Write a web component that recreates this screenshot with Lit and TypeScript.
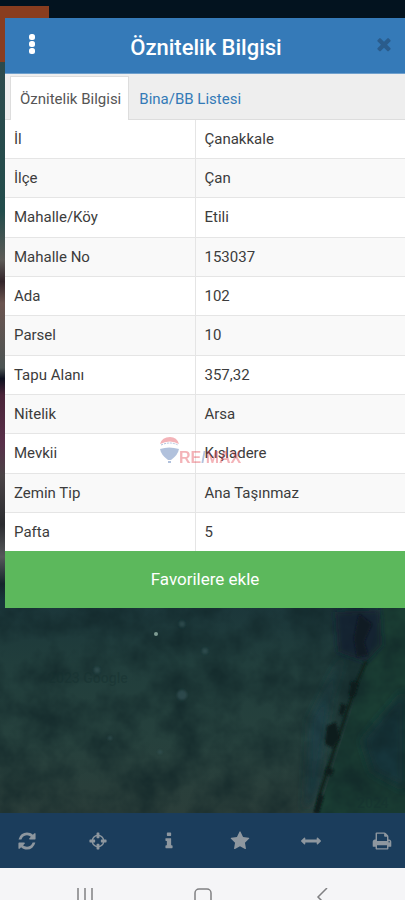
import { LitElement, html, svg, css } from "lit";
import { customElement, state } from "lit/decorators.js";

const ICONS: Record<string, string> = {
  refresh:
    "M1639 1056q0 5-1 7-64 268-268 434.500t-478 166.500q-146 0-282.500-55t-243.500-157l-129 129q-19 19-45 19t-45-19-19-45v-448q0-26 19-45t45-19h448q26 0 45 19t19 45-19 45l-137 137q71 66 161 102t187 36q134 0 250-65t186-179q11-17 53-117 8-23 30-23h192q13 0 22.500 9.500t9.500 22.500zm25-800v448q0 26-19 45t-45 19h-448q-26 0-45-19t-19-45 19-45l138-138q-148-137-349-137-134 0-250 65t-186 179q-11 17-53 117-8 23-30 23h-199q-13 0-22.500-9.500t-9.500-22.500v-7q65-268 270-434.500t480-166.500q146 0 284 55.500t245 156.500l130-129q19-19 45-19t45 19 19 45z",
  crosshairs:
    "M1325 1024h-109q-26 0-45-19t-19-45v-128q0-26 19-45t45-19h109q-32-108-112.500-188.500t-188.500-112.500v109q0 26-19 45t-45 19h-128q-26 0-45-19t-19-45v-109q-108 32-188.500 112.500t-112.500 188.500h109q26 0 45 19t19 45v128q0 26-19 45t-45 19h-109q32 108 112.500 188.500t188.500 112.500v-109q0-26 19-45t45-19h128q26 0 45 19t19 45v109q108-32 188.500-112.500t112.500-188.500zm339-192v128q0 26-19 45t-45 19h-143q-37 161-154.500 278.500t-278.500 154.500v143q0 26-19 45t-45 19h-128q-26 0-45-19t-19-45v-143q-161-37-278.500-154.500t-154.500-278.500h-143q-26 0-45-19t-19-45v-128q0-26 19-45t45-19h143q37-161 154.500-278.500t278.500-154.500v-143q0-26 19-45t45-19h128q26 0 45 19t19 45v143q161 37 278.500 154.500t154.500 278.500h143q26 0 45 19t19 45z",
  info: "M1216 1344v128q0 26-19 45t-45 19h-512q-26 0-45-19t-19-45v-128q0-26 19-45t45-19h64v-384h-64q-26 0-45-19t-19-45v-128q0-26 19-45t45-19h384q26 0 45 19t19 45v576h64q26 0 45 19t19 45zm-128-1152v192q0 26-19 45t-45 19h-256q-26 0-45-19t-19-45v-192q0-26 19-45t45-19h256q26 0 45 19t19 45z",
  star: "M1728 647q0 22-26 48l-363 354 86 500q1 7 1 20 0 21-10.500 35.500t-30.500 14.500q-19 0-40-12l-449-236-449 236q-22 12-40 12-21 0-31.500-14.500t-10.500-35.500q0-6 2-20l86-500-364-354q-25-27-25-48 0-37 56-46l502-73 225-455q19-41 49-41t49 41l225 455 502 73q56 9 56 46z",
  arrows:
    "M1792 896q0 26-19 45l-256 256q-19 19-45 19t-45-19-19-45v-128h-1024v128q0 26-19 45t-45 19-45-19l-256-256q-19-19-19-45t19-45l256-256q19-19 45-19t45 19 19 45v128h1024v-128q0-26 19-45t45-19 45 19l256 256q19 19 19 45z",
  print:
    "M448 1536h896v-256h-896v256zm0-640h896v-384h-160q-40 0-68-28t-28-68v-160h-640v640zm1152 64q0-26-19-45t-45-19-45 19-19 45 19 45 45 19 45-19 19-45zm128 0v416q0 13-9.500 22.500t-22.500 9.500h-224v160q0 40-28 68t-68 28h-960q-40 0-68-28t-28-68v-160h-224q-13 0-22.500-9.500t-9.500-22.500v-416q0-79 56.500-135.500t135.500-56.500h64v-544q0-40 28-68t68-28h672q40 0 88 20t76 48l152 152q28 28 48 76t20 88v256h64q79 0 135.500 56.500t56.500 135.500z",
  times:
    "M1490 1322q0 40-28 68l-136 136q-28 28-68 28t-68-28l-294-294-294 294q-28 28-68 28t-68-28l-136-136q-28-28-28-68t28-68l294-294-294-294q-28-28-28-68t28-68l136-136q28-28 68-28t68 28l294 294 294-294q28-28 68-28t68 28l136 136q28 28 28 68t-28 68l-294 294 294 294q28 28 28 68z",
};

const icon = (name: string) => html`
  <svg class="icon" viewBox="0 0 1792 1792" aria-hidden="true">${svg`<path d=${ICONS[name]} />`}</svg>
`;

const ROWS = [
  ["İl", "Çanakkale"],
  ["İlçe", "Çan"],
  ["Mahalle/Köy", "Etili"],
  ["Mahalle No", "153037"],
  ["Ada", "102"],
  ["Parsel", "10"],
  ["Tapu Alanı", "357,32"],
  ["Nitelik", "Arsa"],
  ["Mevkii", "Kışladere"],
  ["Zemin Tip", "Ana Taşınmaz"],
  ["Pafta", "5"],
];

const TOOLS = [
  ["refresh", "Yenile"],
  ["crosshairs", "Konum"],
  ["info", "Bilgi"],
  ["star", "Favoriler"],
  ["arrows", "Ölçüm"],
  ["print", "Yazdır"],
];

/** Dimmed satellite view behind the dialog. */
@customElement("satellite-map")
class SatelliteMap extends LitElement {
  static styles = css`
    :host {
      display: block;
      overflow: hidden;
      background: #1f3a38;
    }
    .view {
      display: block;
      width: 100%;
      height: 100%;
    }
    .stamp {
      font: 500 14px Roboto, sans-serif;
      fill: #15302f;
      fill-opacity: 0.45;
    }
  `;
  render() {
    return html`
      <svg class="view" viewBox="0 0 405 813" preserveAspectRatio="xMidYMax slice" aria-hidden="true">
        <defs>
          <linearGradient id="ground" x1="0" y1="600" x2="0" y2="813" gradientUnits="userSpaceOnUse">
            <stop offset="0" stop-color="#1b363a" />
            <stop offset="0.3" stop-color="#213e3c" />
            <stop offset="0.65" stop-color="#26413d" />
            <stop offset="1" stop-color="#2b3e3a" />
          </linearGradient>
          <linearGradient id="edge" x1="0" y1="60" x2="0" y2="600" gradientUnits="userSpaceOnUse">
            <stop offset="0" stop-color="#2c4a4c" />
            <stop offset="0.28" stop-color="#234d4c" />
            <stop offset="0.37" stop-color="#5c5a56" />
            <stop offset="0.41" stop-color="#33252a" />
            <stop offset="0.45" stop-color="#6b5550" />
            <stop offset="0.57" stop-color="#4c5453" />
            <stop offset="0.59" stop-color="#0e1120" />
            <stop offset="0.62" stop-color="#4a2438" />
            <stop offset="0.71" stop-color="#59304a" />
            <stop offset="0.77" stop-color="#4a4446" />
            <stop offset="0.86" stop-color="#2b2c30" />
            <stop offset="0.92" stop-color="#55585a" />
            <stop offset="0.97" stop-color="#15252b" />
            <stop offset="1" stop-color="#17353a" />
          </linearGradient>
          <filter id="grain" x="0" y="0" width="100%" height="100%" color-interpolation-filters="sRGB">
            <feTurbulence type="fractalNoise" baseFrequency="0.03" numOctaves="4" seed="8" />
            <feColorMatrix values="0 0 0 0 0.06  0 0 0 0 0.14  0 0 0 0 0.15  1.3 0 0 0 -0.4" />
          </filter>
          <filter id="soft" x="-50%" y="-50%" width="200%" height="200%"><feGaussianBlur stdDeviation="5" /></filter>
          <filter id="fine" x="-50%" y="-50%" width="200%" height="200%"><feGaussianBlur stdDeviation="1" /></filter>
          <filter id="shade" x="-50%" y="-50%" width="200%" height="200%"><feGaussianBlur stdDeviation="3" /></filter>
        </defs>
        <rect y="600" width="405" height="213" fill="url(#ground)" />
        <path d="M385 600H405V813H318L350 715Z" fill="#1a3d33" />
        <path d="M405 690V790L372 772L362 740Z" fill="#17363a" filter="url(#soft)" />
        <path d="M345 650L330 700L318 790L305 813L310 720Z" fill="#1f3e44" filter="url(#soft)" />
        <rect y="600" width="405" height="213" filter="url(#grain)" />
        <path d="M335 612L380 610L382 645L366 662L338 652Z" fill="#131c2c" fill-opacity="0.7" filter="url(#shade)" />
        <path d="M359 614L372 624L364 642L368 655L357 657L354 638Z" fill="#101522" fill-opacity="0.8" filter="url(#fine)" />
        <path d="M366 661L357 682L349 706L338 738L327 772L321 790L316 813" fill="none" stroke="#0b201c" stroke-width="3" filter="url(#fine)" />
        <g fill="#0c1f1d" filter="url(#fine)">
          <path d="M351 681L358 683L355 695L349 698Z" />
          <path d="M341 703L347 706L343 716L339 714Z" />
          <path d="M327 726L336 722L340 738L333 748L325 744Z" />
          <path d="M327 767L334 770L331 776L325 773Z" />
          <path d="M319 794L324 796L319 813H314Z" />
        </g>
        <circle cx="156" cy="634" r="2" fill="#7f9c93" />
        <g fill="#36565a" fill-opacity="0.6" filter="url(#fine)">
          <circle cx="182" cy="695" r="5" />
          <circle cx="205" cy="651" r="3" />
          <circle cx="97" cy="670" r="3" />
          <circle cx="110" cy="738" r="2" />
          <circle cx="160" cy="752" r="2" />
          <circle cx="182" cy="624" r="3" />
        </g>
        <text class="stamp" x="48" y="683">2023 Google</text>
        <text class="stamp" x="357" y="808">2024</text>
        <rect y="0" width="405" height="60" fill="#03131f" />
        <rect y="60" width="8" height="548" fill="url(#edge)" />
        <rect y="6" width="49" height="56" fill="#893d1f" />
      </svg>
    `;
  }
}

@customElement("app-root")
class AppRoot extends LitElement {
  @state() private tab = 0;

  static styles = css`
    :host {
      display: block;
      font: 15px/22px Roboto, sans-serif;
      color: #3c3c3c;
    }
    * {
      box-sizing: border-box;
    }
    button {
      margin: 0;
      padding: 0;
      border: 0;
      background: none;
      font: inherit;
      color: inherit;
      cursor: pointer;
    }
    .screen {
      display: flex;
      flex-direction: column;
      min-height: 100vh;
    }
    .stage {
      position: relative;
      flex: 1;
      padding: 18px 0 24px 5px;
    }
    .backdrop {
      position: absolute;
      inset: 0;
    }
    .dialog {
      position: relative;
      background: #fff;
    }
    .head {
      display: grid;
      grid-template-columns: 54px 1fr 52px;
      align-items: center;
      height: 56px;
      background: #357ab8;
      border-bottom: 1px solid #6fa0cd;
      color: #fff;
    }
    .title {
      margin: 0;
      padding-top: 4px;
      text-align: center;
      font-size: 22px;
      line-height: 28px;
      font-weight: 500;
    }
    .menu,
    .close {
      display: grid;
      place-items: center;
      height: 44px;
      padding-bottom: 3px;
    }
    .dots {
      width: 8px;
      height: 22px;
      fill: #fff;
    }
    .icon {
      display: block;
      width: 20px;
      height: 20px;
      fill: currentColor;
    }
    .close {
      padding-left: 10px;
      color: #2a5c8c;
    }
    .tabs {
      display: flex;
      height: 46px;
      padding: 2px 5px 0;
      background: #eee;
      border-bottom: 1px solid #ddd;
    }
    .tab {
      height: 44px;
      padding: 0 7px 0 9px;
      border: 1px solid transparent;
      border-bottom: 0;
      color: #337ab7;
      white-space: nowrap;
    }
    .tab[aria-selected="true"] {
      background: #fff;
      border-color: #ddd;
      color: #555;
    }
    .facts {
      width: 100%;
      height: 431px;
      border-collapse: collapse;
      table-layout: fixed;
    }
    .body {
      position: relative;
    }
    .name,
    .value {
      padding: 0 9px;
      border-top: 1px solid #e5e5e5;
      text-align: left;
      font-weight: 400;
    }
    .name {
      width: 190px;
      border-right: 1px solid #e5e5e5;
    }
    .row:first-child .name,
    .row:first-child .value {
      border-top: 0;
    }
    .row:nth-child(even) {
      background: #f9f9f9;
    }
    .mark {
      position: absolute;
      left: 154px;
      bottom: 84px;
      width: 88px;
      height: 32px;
      pointer-events: none;
      opacity: 0.36;
    }
    .brand {
      font: bold 16px "Liberation Sans", sans-serif;
      fill: #e0303c;
    }
    .slash {
      fill: #2b55a0;
    }
    .add {
      display: block;
      width: 100%;
      height: 57px;
      padding-bottom: 2px;
      background: #5cb85c;
      color: #fff;
      font-size: 17px;
    }
    .tools {
      display: flex;
      justify-content: space-between;
      align-items: center;
      height: 55px;
      padding: 0 13px 0 17px;
      background: #1b3d5c;
      color: #8e979f;
    }
    .system {
      display: grid;
      grid-template-columns: repeat(3, 1fr);
      justify-items: center;
      height: 32px;
      padding: 20px 24px 0 26px;
      background: #f5f5f7;
      overflow: hidden;
    }
    .key {
      height: 18px;
    }
    .glyph {
      display: block;
      width: 20px;
      height: 18px;
      fill: none;
      stroke: #808083;
      stroke-width: 1.5;
    }
  `;

  render() {
    return html`
      <div class="screen">
        <main class="stage">
          <satellite-map class="backdrop"></satellite-map>
          <section class="dialog" role="dialog" aria-labelledby="title">
            <header class="head">
              <button class="menu" aria-label="Menü">
                <svg class="dots" viewBox="0 0 8 22" aria-hidden="true">
                  <rect x="1" y="1" width="6" height="6" rx="2.500" />
                  <rect x="1" y="8" width="6" height="6" rx="2.500" />
                  <rect x="1" y="15" width="6" height="6" rx="2.500" />
                </svg>
              </button>
              <h1 class="title" id="title">Öznitelik Bilgisi</h1>
              <button class="close" aria-label="Kapat">${icon("times")}</button>
            </header>
            <div class="tabs" role="tablist">
              ${["Öznitelik Bilgisi", "Bina/BB Listesi"].map(
                (label, i) => html`<button
                  class="tab"
                  role="tab"
                  aria-selected=${this.tab === i ? "true" : "false"}
                  @click=${() => (this.tab = i)}
                >${label}</button>`
              )}
            </div>
            <div class="body">
              <table class="facts">
                <tbody>
                  ${ROWS.map(
                    ([name, value]) => html`<tr class="row">
                      <th class="name" scope="row">${name}</th>
                      <td class="value">${value}</td>
                    </tr>`
                  )}
                </tbody>
              </table>
              <svg class="mark" viewBox="0 0 88 32" aria-label="RE/MAX">
                <path d="M1 9Q3 2 11 2Q18 2 20 9Q11 4 1 9Z" fill="#e0303c" />
                <path d="M2 10Q11 6 19 10" fill="none" stroke="#2b55a0" stroke-dasharray="2 1" />
                <path d="M1 14Q10 11 20 14Q19 20 12 25H9Q2 20 1 14Z" fill="#2b55a0" />
                <rect x="9" y="26" width="3" height="2" fill="#2b55a0" />
                <text class="brand" x="20" y="28">RE<tspan class="slash">/</tspan>MAX</text>
              </svg>
            </div>
            <button class="add">Favorilere ekle</button>
          </section>
        </main>
        <nav class="tools" aria-label="Harita araçları">
          ${TOOLS.map(([name, label]) => html`<button aria-label=${label}>${icon(name)}</button>`)}
        </nav>
        <footer class="system">
          <button class="key" aria-label="Son uygulamalar">
            <svg class="glyph" viewBox="0 0 20 18"><path d="M3 0V18M10 0V18M17 0V18" /></svg>
          </button>
          <button class="key" aria-label="Ana ekran">
            <svg class="glyph" viewBox="0 0 20 18"><rect x="2" y="1" width="16" height="16" rx="4" /></svg>
          </button>
          <button class="key" aria-label="Geri">
            <svg class="glyph" viewBox="0 0 20 18"><path d="M15 0L6 9L15 18" /></svg>
          </button>
        </footer>
      </div>
    `;
  }
}
